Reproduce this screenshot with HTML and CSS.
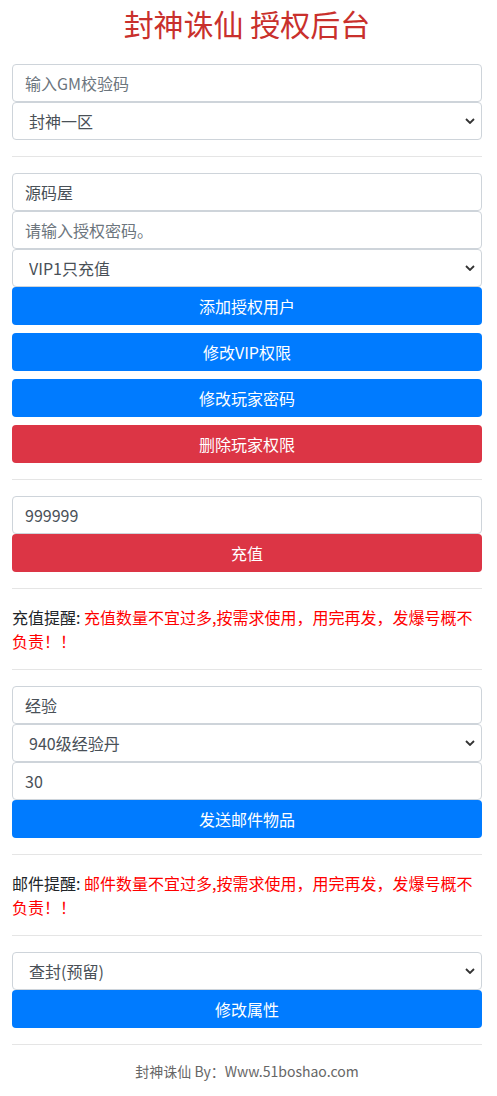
FILE: index.html
```html
<!DOCTYPE html>
<html lang="zh-CN">
<head>
  <meta charset="UTF-8" />
  <title>封神诛仙 授权后台</title>
  <link rel="stylesheet" href="styles.css">
</head>
<body>
  <div class="container">
    <h1 class="titre">封神诛仙 授权后台</h1>

    <!-- Verification + zone -->
    <input type="text" class="champ" placeholder="输入GM校验码">
    <select class="champ choix">
      <option>封神一区</option>
    </select>

    <hr>

    <!-- Gestion des utilisateurs -->
    <input type="text" class="champ" value="源码屋">
    <input type="password" class="champ" placeholder="请输入授权密码。">
    <select class="champ choix">
      <option>VIP1只充值</option>
    </select>
    <button class="btn bleu">添加授权用户</button>
    <button class="btn bleu espace">修改VIP权限</button>
    <button class="btn bleu espace">修改玩家密码</button>
    <button class="btn rouge espace">删除玩家权限</button>

    <hr>

    <!-- Recharge -->
    <input type="text" class="champ" value="999999">
    <button class="btn rouge">充值</button>

    <hr>

    <p class="note">充值提醒: <span class="alerte">充值数量不宜过多,按需求使用，用完再发，发爆号概不负责！！</span></p>

    <hr>

    <!-- Mail -->
    <input type="text" class="champ" value="经验">
    <select class="champ choix">
      <option>940级经验丹</option>
    </select>
    <input type="text" class="champ" value="30">
    <button class="btn bleu">发送邮件物品</button>

    <hr>

    <p class="note">邮件提醒: <span class="alerte">邮件数量不宜过多,按需求使用，用完再发，发爆号概不负责！！</span></p>

    <hr>

    <select class="champ choix">
      <option>查封(预留)</option>
    </select>
    <button class="btn bleu">修改属性</button>

    <hr>

    <footer>封神诛仙 By：Www.51boshao.com</footer>
  </div>
</body>
</html>
```

FILE: styles.css
```css
body {
  margin: 0;
  background: #fff;
  color: #212529;
  font-family: "Noto Sans CJK SC", "Noto Sans", sans-serif;
  font-size: 16px;
  line-height: 24px;
}
.container {
  padding: 0 15px 0 12px;
}
.titre {
  margin: 5px 0 23px;
  text-align: center;
  color: #c9302c;
  font-size: 30px;
  font-weight: normal;
  line-height: 36px;
}

/* Champs de saisie */
.champ {
  display: block;
  box-sizing: border-box;
  width: 100%;
  height: 38px;
  margin: 0;
  padding: 6px 12px;
  font-family: inherit;
  font-size: 16px;
  line-height: 24px;
  color: #495057;
  background: #fff;
  border: 1px solid #ced4da;
  border-radius: 4px;
}
.champ::placeholder {
  color: #6c757d;
}
.choix {
  appearance: none;
  -webkit-appearance: none;
  padding-left: 16px;
  background-image: url("data:image/svg+xml,%3Csvg xmlns='http://www.w3.org/2000/svg' width='10' height='6' viewBox='0 0 10 6'%3E%3Cpath d='M1 1l4 4 4-4' fill='none' stroke='%23333' stroke-width='1.8'/%3E%3C/svg%3E");
  background-repeat: no-repeat;
  background-position: right 6px center;
  background-size: 10px 6px;
}

/* Boutons */
.btn {
  display: block;
  box-sizing: border-box;
  width: 100%;
  height: 38px;
  padding: 6px 12px;
  font-family: inherit;
  font-size: 16px;
  line-height: 24px;
  color: white;
  border: 1px solid transparent;
  border-radius: 4px;
  cursor: pointer;
}
.espace {
  margin-top: 8px;
}
.bleu {
  background: #007bff;
}
.rouge {
  background: #dc3545;
}

hr {
  margin: 16px 0;
  border: 0;
  border-top: 1px solid rgba(0,0,0,0.1);
}
.note {
  margin: 16px 0;
}
.alerte {
  color: #ff0000;
}
footer {
  text-align: center;
  color: #666;
  font-size: 14px;
  line-height: 20px;
}
```
